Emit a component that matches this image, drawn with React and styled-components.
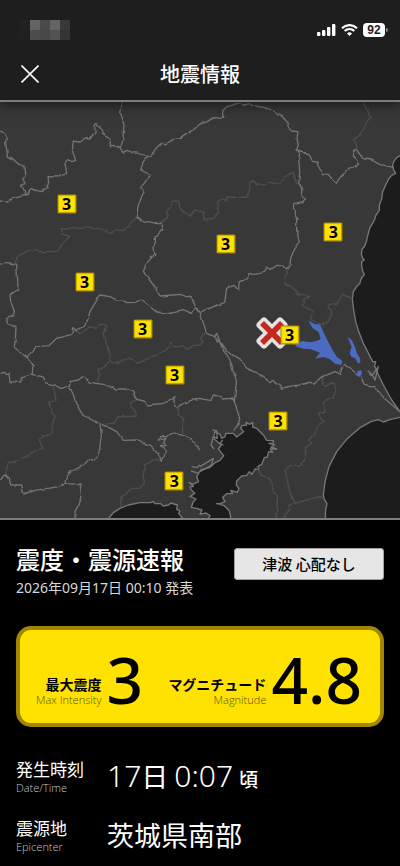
import styled, { createGlobalStyle } from 'styled-components';

const theme = {
    land: '#383838',
    sea: '#1c1c1c',
    bar: '#1e1e1e',
    line: '#7d7d7d',
    yellow: '#ffe200',
    yellowBorder: '#a38600',
    lake: '#4a6bc0',
    font: `'Noto Sans', 'Noto Sans CJK JP', sans-serif`,
    fontJp: `'Noto Sans CJK JP', sans-serif`,
};

const GlobalStyle = createGlobalStyle`
    * {
        box-sizing: border-box;
    }
    body {
        margin: 0;
        background: #000;
        color: #fff;
        font-family: ${theme.font};
    }
`;

const Page = styled.main`
    display: flex;
    flex-direction: column;
    min-height: 100vh;
`;

const Header = styled.header`
    position: relative;
    z-index: 1;
    background: ${theme.bar};
    border-bottom: 2px solid ${theme.line};
    box-shadow: 0 4px 12px rgba(0, 0, 0, 0.5);
`;

const StatusBar = styled.div`
    display: flex;
    justify-content: space-between;
    align-items: center;
    height: 60px;
    padding: 0 12px 0 20px;
`;

const Mosaic = styled.div`
    display: grid;
    grid-template-columns: repeat(5, 10px);
    grid-auto-rows: 10px;
`;

const Cell = styled.span`
    background: ${({ $shade }) => $shade};
`;

const StatusIcons = styled.div`
    display: flex;
    align-items: center;
    gap: 5px;
`;

const Battery = styled.span`
    display: flex;
    align-items: center;
    gap: 1px;
`;

const BatteryLevel = styled.span`
    width: 22px;
    height: 14px;
    border-radius: 4px;
    background: #fff;
    color: ${theme.bar};
    font: bold 12px/14px 'Liberation Sans', sans-serif;
    text-align: center;
`;

const BatteryTip = styled.span`
    width: 2px;
    height: 4px;
    border-radius: 0 2px 2px 0;
    background: #8a8a8a;
`;

const TitleBar = styled.div`
    display: grid;
    grid-template-columns: 60px 1fr 60px;
    align-items: center;
    height: 40px;
    padding-bottom: 13px;
`;

const CloseButton = styled.button`
    justify-self: center;
    display: flex;
    padding: 0;
    border: none;
    background: transparent;
    color: #fff;
    cursor: pointer;
`;

const Title = styled.h1`
    margin: 0;
    font: 500 20px/28px ${theme.fontJp};
    text-align: center;
`;

const MapWrap = styled.section`
    position: relative;
    border-bottom: 2px solid ${theme.line};
    background: ${theme.land};
`;

const MapSvg = styled.svg`
    display: block;
    width: 100%;
    height: auto;
`;

const Pin = styled.span`
    position: absolute;
    transform: translate(-50%, -50%);
    width: 19px;
    height: 19px;
    border: 1px solid ${theme.yellowBorder};
    border-radius: 1px;
    box-shadow: inset 0 0 1px ${theme.yellowBorder};
    background: ${theme.yellow};
    color: #000;
    font: bold 16px/17px 'Noto Sans', sans-serif;
    text-align: center;
`;

const Epicenter = styled.svg`
    position: absolute;
    transform: translate(-50%, -50%);
`;

const Panel = styled.section`
    padding: 24px 16px 6px;
`;

const Summary = styled.div`
    display: flex;
    justify-content: space-between;
    align-items: flex-start;
`;

const ReportTitle = styled.h2`
    margin: 0;
    font: 500 24px/30px ${theme.fontJp};
`;

const Issued = styled.p`
    margin: 4px 0 0;
    font-size: 14px;
    line-height: 20px;
    color: #d8d8d8;
`;

const TsunamiButton = styled.button`
    width: 150px;
    height: 32px;
    margin-top: 4px;
    padding: 0;
    border: 1px solid #a6a0a0;
    border-radius: 3px;
    background: #e6e6e6;
    color: #000;
    font: 500 15px/30px ${theme.fontJp};
`;

const Card = styled.div`
    display: flex;
    justify-content: space-between;
    align-items: flex-end;
    height: 101px;
    margin-top: 28px;
    padding: 0 18px 16px 16px;
    border: 4px solid ${theme.yellowBorder};
    border-radius: 15px;
    background: ${theme.yellow};
    color: #000;
`;

const Stat = styled.div`
    display: flex;
    align-items: flex-end;
    gap: 5px;
`;

const StatLabel = styled.div`
    text-align: right;
    font: 700 14px/17px ${theme.fontJp};
`;

const English = styled.div`
    font: 300 11px/14px 'Open Sans', sans-serif;
    color: ${({ $color }) => $color};
`;

const StatValue = styled.div`
    font: 500 64px/54px 'Noto Sans', sans-serif;
`;

const Details = styled.dl`
    display: grid;
    gap: 21px;
    margin: 30px 0 0;
`;

const Detail = styled.div`
    display: grid;
    grid-template-columns: 91px 1fr;
`;

const Term = styled.dt`
    font: 400 17px/24px ${theme.fontJp};
`;

const Value = styled.dd`
    margin: 0;
    font: 400 27px/38px ${theme.fontJp};
`;

const Digits = styled.span`
    font: 300 30px/30px 'Noto Sans', sans-serif;
`;

const Around = styled.small`
    font-size: 19px;
    font-weight: 500;
    line-height: 19px;
`;

const mosaic = [
    '#222', '#646464', '#4a4a4a', '#646464', '#383838',
    '#202020', '#4c4c4c', '#484848', '#525252', '#343434',
];

// map units are a third of a pixel at a 400px wide screen
const MAP = { width: 1200, height: 1248, top: 21 };

const seas = [
    'M1200 182L1190 188 1181 200 1178 212 1181 225 1187 235 1175 241 1166 252 1157 270 1148 290 1145 312 1138 330 1138 346 1128 360 1122 378 1110 398 1104 418 1099 440 1093 455 1086 462 1084 478 1088 490 1093 494 1085 500 1085 512 1088 528 1093 538 1083 552 1080 564 1070 575 1060 590 1057 612 1061 645 1067 680 1077 712 1090 745 1104 772 1118 800 1127 800 1124 812 1131 830 1150 870 1175 915 1200 950L1210 965 1172 973 1150 981 1135 974 1113 980 1080 998 1040 1033 1010 1070 987 1115 975 1160 970 1200 973 1213 981 1226 977 1245 976 1275H1210V182Z',
    'M700 1015L710 1026 731 1010 722 1000 726 992 740 990 738 982 750 988 758 982 758 996 770 1000 780 1010 790 1020 800 1036 820 1037 820 1044 807 1045 824 1050 813 1056 830 1062 811 1062 818 1072 806 1070 802 1086 793 1088 785 1108 774 1114 777 1124 765 1122 756 1138 748 1130 740 1141 725 1143 710 1158 709 1170 717 1180 712 1192 692 1186 698 1196 680 1196 668 1207 675 1220 662 1225 650 1226 673 1232 688 1247 694 1275H622L630 1262 618 1254 600 1258 606 1245 590 1240 574 1237 580 1220 588 1212 570 1204 584 1195 574 1185 570 1176 580 1174 567 1162 578 1168 596 1160 590 1145 602 1125 630 1117 645 1103 660 1096 671 1082 655 1062 664 1050 640 1030 645 1010 660 1018 665 1030 675 1025 677 1015Z',
    'M322 1275L340 1253 360 1240 385 1230 420 1223 452 1223 460 1220 465 1226 482 1226 490 1233 506 1230 512 1224 532 1230 530 1243 540 1248 536 1255 552 1275Z',
];

const prefectures = [
    'M370 20L361 52 372 90 368 140 360 158 356 154 350 158 341 151 331 152 330 132 308 118 303 102 289 86 285 92 285 114 268 130 256 132 241 141 220 138 217 165 227 197 214 200 203 194 195 203 200 235 186 238 170 246 144 245 146 262 140 281 132 283 128 293 110 290 95 281 89 284 85 297 77 298 70 280 61 272 75 265 68 250 77 238 75 218 54 206 36 189 22 184 17 140 20 130 12 113 0 108',
    'M0 318L20 322 30 315 50 308 85 298',
    'M360 158L368 172 382 166 398 173 412 174 430 182 444 184 460 176 466 162 484 145 500 146 522 132 542 127 562 113 580 105 600 87 622 80 640 68 668 70 668 48 680 35 710 26 730 30 750 26 775 35 800 39 820 48 845 63 866 86 870 108 894 110 891 132 895 145 891 164 900 170 896 190 899 230 896 265 905 280 905 298 916 312 908 320 882 325 880 335 890 370 890 405 898 440 880 470 872 490 870 508 862 520 852 520 845 512 830 511 814 523 800 516 794 533 760 538 750 535 745 548 718 560 715 585 702 571 680 580 674 622 655 630 625 640 600 652 592 650 588 640 574 605 560 605 541 598 518 600 480 603 460 570 430 530 440 505 465 476 458 458 466 445 466 425 490 402 484 385 468 386 450 380 430 382 409 366 415 330 432 292 422 278 436 260 452 240 422 225 430 200 444 184',
    'M891 164L910 170 925 180 934 198 955 202 960 225 967 235 985 239 1008 263 1027 240 1050 220 1076 208 1060 183 1063 163 1072 167 1088 190 1115 195 1140 209 1180 217',
    'M0 508L18 502 50 508 52 540 54 585 30 600 32 620 43 648 38 664 20 670 22 685 48 698 46 730 43 755 82 785 98 815 97 837 68 848 60 862 33 860 30 837 18 838 14 832 0 834',
    'M82 785L110 755 147 752 170 730 215 718 218 698 228 705 258 692 263 672 270 650 300 600 330 605 350 615 365 614 380 623 410 622 422 613 440 628 455 640 470 651 500 654 550 644 575 655 588 638 598 654',
    'M92 837L126 845 135 863 165 870 181 880 208 872 210 860 235 855 248 845 270 862 320 870 347 882 375 882 397 890 410 913 432 918 442 930 490 925 515 915 523 905 522 928 533 936 555 922 565 928 578 912 600 910 632 917 640 900 660 905 668 912 695 910 705 920',
    'M208 872L220 900 230 930 250 962 300 987 322 995 350 1010 370 1036 415 1035 450 1052 473 1075 485 1100 492 1090 496 1065 485 1055 500 1050 490 1043 498 1030 475 1035 478 1025 500 1025 515 1012 560 1025 585 1045 600 1066',
    'M300 987L304 1020 298 1070 285 1092 262 1098 250 1112 215 1128 200 1145 193 1168 175 1175 100 1187 72 1197 65 1170 32 1170 28 1150 16 1140 0 1155',
    'M193 1168L240 1166 245 1210 225 1250 225 1275',
    'M600 652L620 715 644 725 650 715 665 755 690 795 709 860 703 920 714 950 719 975 700 1010',
    'M644 725L670 755 700 782 730 800 738 818 780 840 808 860 820 857 845 880 880 872 900 870 920 864 940 867 960 847 985 838 1005 830 1023 838 1024 820 1032 808 1060 828 1068 834 1080 845 1093 868 1125 876 1140 895 1155 912 1200 950',
];

const districts = [
    'M50 505L50 490 66 474 90 466 118 470 160 470 175 466 188 445 210 424 190 418 183 400 200 402 212 397 245 400 265 395 285 403 310 402 335 414 345 407 367 405 390 393 398 378 410 368',
    'M480 382L502 370 500 350 512 337 512 320 535 315 540 340 555 350 572 364 585 345 600 348 612 350 615 375 630 375 655 355 650 322 665 312 678 318 685 306 715 307 740 307 750 280 748 265 758 256 770 270 790 270 810 262 840 268 855 245 870 240 880 230 888 260 896 268',
    'M1088 20L1112 65 1095 90 1088 112 1062 135 1070 165',
    'M860 520L862 535 850 548 855 570 875 575 900 600 928 605 910 618 908 632 940 650 932 670 942 678 970 690 985 680 998 650 985 640 985 628 1010 626 1030 600 1058 610',
    'M228 705L240 717 270 695 285 700 305 684 320 695 312 715 323 760 330 798 310 818 294 823 298 840 293 860',
    'M330 800L350 805 390 785 412 805 450 788 465 780 500 765 512 742 525 755 550 755 560 762 575 752 600 750 610 740 600 730 615 715',
    'M160 875L168 915 143 925 162 960 155 1012 118 1035 128 1060 85 1080 50 1098 25 1103 18 1130 20 1145',
    'M410 915L390 922 400 945 410 963 350 966 343 985 325 985 320 995',
    'M535 935L535 960 550 970 547 1020',
    'M490 1097L460 1094 435 1110 432 1170 420 1180 395 1180 380 1195 363 1205 362 1235',
    'M962 847L975 875 1000 863 1010 880 1000 905 970 920 972 950 957 955 960 970 975 980 955 990 945 1020 925 1035 935 1045 915 1060 918 1090 900 1110 870 1112 855 1125 870 1190 885 1225 960 1204 972 1212',
    'M770 1114L785 1145 810 1150 815 1175 832 1210 828 1275',
    'M885 1225L870 1230 868 1245 845 1270',
];

const lakes = [
    'M925 676L945 688 960 688 970 710 982 735 995 760 1010 785 1027 798 1024 810 1005 806 990 793 970 786 945 791 960 773 930 762 910 761 890 755 884 746 908 738 930 742 950 738 962 732 956 712 938 700Z',
    'M1042 725L1055 735 1065 755 1070 773 1080 790 1081 802 1074 806 1066 790 1054 785 1049 775 1055 755Z',
    'M1072 828L1084 826 1086 838 1078 846 1070 840Z',
];

const islets = [
    'M1103 827L1117 840 1135 815 1125 855 1118 842 1108 838',
    'M638 1005L650 1008 652 1030 640 1025 633 1050 642 1062M668 1035L660 1045 670 1050',
    'M600 1115L640 1090 634 1110 610 1125M615 1120L600 1130',
    'M575 1115L590 1118 600 1110M573 1128L596 1135',
];

const pins = [
    { x: 200, y: 327 },
    { x: 254, y: 562 },
    { x: 677, y: 447 },
    { x: 1000, y: 412 },
    { x: 428, y: 702 },
    { x: 524, y: 841 },
    { x: 523, y: 1158 },
    { x: 834, y: 979 },
    { x: 869, y: 719 },
];

const place = ({ x, y }) => ({
    left: `${(x / MAP.width) * 100}%`,
    top: `${((y - MAP.top) / MAP.height) * 100}%`,
});

const QuakeMap = () => (
    <MapWrap aria-label="地図">
        <MapSvg
            viewBox={`0 ${MAP.top} ${MAP.width} ${MAP.height}`}
            fill="none"
            strokeWidth="4"
            strokeLinejoin="round"
            aria-hidden="true"
        >
            <defs>
                <filter id="rough" filterUnits="userSpaceOnUse" x="0" y="0" width="1200" height="1280">
                    <feTurbulence type="fractalNoise" baseFrequency="0.05" numOctaves="1" seed="4" />
                    <feDisplacementMap in="SourceGraphic" scale="12" xChannelSelector="R" yChannelSelector="G" />
                </filter>
            </defs>
            {seas.map((d) => (
                <path key={d} d={d} fill={theme.sea} stroke="#777" />
            ))}
            <g filter="url(#rough)" colorInterpolationFilters="sRGB">
                {districts.map((d) => (
                    <path key={d} d={d} stroke="#4e4e4e" />
                ))}
                {prefectures.map((d) => (
                    <path key={d} d={d} stroke="#747474" />
                ))}
            </g>
            {islets.map((d) => (
                <path key={d} d={d} stroke="#777" />
            ))}
            {lakes.map((d) => (
                <path key={d} d={d} fill={theme.lake} />
            ))}
        </MapSvg>
        <Epicenter
            style={place({ x: 815, y: 715 })}
            width="32"
            height="32"
            viewBox="0 0 32 32"
            aria-hidden="true"
        >
            <path
                d="M8 4L16 12 24 4 28 8 20 16 28 24 24 28 16 20 8 28 4 24 12 16 4 8Z"
                fill="#c4281f"
                stroke="#e3e3e3"
                strokeWidth="7"
                strokeLinejoin="round"
                paintOrder="stroke"
            />
        </Epicenter>
        {pins.map((pin) => (
            <Pin key={`${pin.x}-${pin.y}`} style={place(pin)}>
                3
            </Pin>
        ))}
    </MapWrap>
);

const App = () => (
    <Page>
        <GlobalStyle />
        <Header>
            <StatusBar>
                <Mosaic aria-hidden="true">
                    {mosaic.map((shade, i) => (
                        <Cell key={i} $shade={shade} />
                    ))}
                </Mosaic>
                <StatusIcons>
                    <svg width="19" height="12" viewBox="0 0 19 12" fill="#fff" aria-hidden="true">
                        <rect x="0" y="8" width="3.4" height="4" rx="1" />
                        <rect x="5" y="6" width="3.4" height="6" rx="1" />
                        <rect x="10" y="3" width="3.4" height="9" rx="1" />
                        <rect x="15" y="0" width="3.4" height="12" rx="1" />
                    </svg>
                    <svg width="17" height="12" viewBox="0 0 17 12" fill="none" stroke="#fff" strokeWidth="2.2" aria-hidden="true">
                        <path d="M1 4.2a10.6 10.6 0 0 1 15 0M3.7 7a6.8 6.8 0 0 1 9.6 0" />
                        <path d="M8.5 12L6 9.5a3.6 3.6 0 0 1 5 0Z" fill="#fff" stroke="none" />
                    </svg>
                    <Battery>
                        <BatteryLevel>92</BatteryLevel>
                        <BatteryTip />
                    </Battery>
                </StatusIcons>
            </StatusBar>
            <TitleBar>
                <CloseButton aria-label="閉じる">
                    <svg width="18" height="18" viewBox="0 0 18 18" stroke="currentColor" strokeWidth="1.6">
                        <path d="M0.5 0.5L17.5 17.5M17.5 0.5L0.5 17.5" />
                    </svg>
                </CloseButton>
                <Title>地震情報</Title>
            </TitleBar>
        </Header>
        <QuakeMap />
        <Panel>
            <Summary>
                <div>
                    <ReportTitle>震度・震源速報</ReportTitle>
                    <Issued>2026年09月17日 00:10 発表</Issued>
                </div>
                <TsunamiButton>津波 心配なし</TsunamiButton>
            </Summary>
            <Card>
                <Stat>
                    <StatLabel>
                        最大震度
                        <English $color="#5c5100">Max Intensity</English>
                    </StatLabel>
                    <StatValue>3</StatValue>
                </Stat>
                <Stat>
                    <StatLabel>
                        マグニチュード
                        <English $color="#5c5100">Magnitude</English>
                    </StatLabel>
                    <StatValue>4.8</StatValue>
                </Stat>
            </Card>
            <Details>
                <Detail>
                    <Term>
                        発生時刻
                        <English $color="#c8c8c8">Date/Time</English>
                    </Term>
                    <Value>
                        <Digits>17</Digits>日 <Digits>0:07</Digits> <Around>頃</Around>
                    </Value>
                </Detail>
                <Detail>
                    <Term>
                        震源地
                        <English $color="#c8c8c8">Epicenter</English>
                    </Term>
                    <Value>茨城県南部</Value>
                </Detail>
            </Details>
        </Panel>
    </Page>
);

export default App;
